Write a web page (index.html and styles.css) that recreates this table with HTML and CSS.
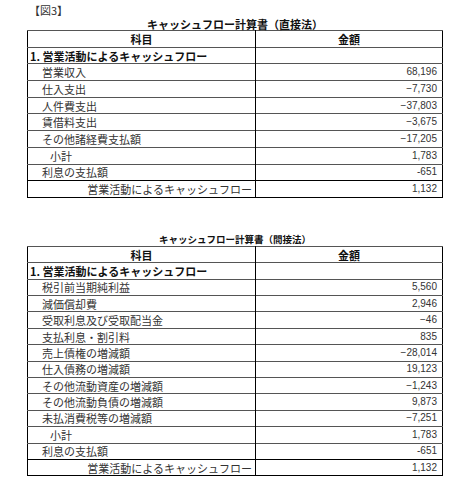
FILE: index.html
```html
<!DOCTYPE html>
<html lang="ja">
<head>
    <meta charset="UTF-8">
    <meta name="viewport" content="width=device-width, initial-scale=1.0">
    <title>キャッシュフロー計算書</title>
    <link rel="stylesheet" href="styles.css">
</head>
<body>
    <div class="page">
        <div class="fig-label">【図3】</div>

        <h2 class="cf-title">キャッシュフロー計算書（直接法）</h2>
        <table class="cf-table direct">
            <tr class="head"><th>科目</th><th>金額</th></tr>
            <tr class="section"><td>1. 営業活動によるキャッシュフロー</td><td></td></tr>
            <tr><td class="item">営業収入</td><td class="num">68,196</td></tr>
            <tr><td class="item">仕入支出</td><td class="num">−7,730</td></tr>
            <tr><td class="item">人件費支出</td><td class="num">−37,803</td></tr>
            <tr><td class="item">賃借料支出</td><td class="num">−3,675</td></tr>
            <tr><td class="item">その他諸経費支払額</td><td class="num">−17,205</td></tr>
            <tr><td class="sub">小計</td><td class="num">1,783</td></tr>
            <tr><td class="item">利息の支払額</td><td class="num">-651</td></tr>
            <tr class="total"><td>営業活動によるキャッシュフロー</td><td class="num">1,132</td></tr>
        </table>

        <h2 class="cf-title small">キャッシュフロー計算書（間接法）</h2>
        <table class="cf-table">
            <tr class="head"><th>科目</th><th>金額</th></tr>
            <tr class="section"><td>1. 営業活動によるキャッシュフロー</td><td></td></tr>
            <tr><td class="item">税引前当期純利益</td><td class="num">5,560</td></tr>
            <tr><td class="item">減価償却費</td><td class="num">2,946</td></tr>
            <tr><td class="item">受取利息及び受取配当金</td><td class="num">−46</td></tr>
            <tr><td class="item">支払利息・割引料</td><td class="num">835</td></tr>
            <tr><td class="item">売上債権の増減額</td><td class="num">−28,014</td></tr>
            <tr><td class="item">仕入債務の増減額</td><td class="num">19,123</td></tr>
            <tr><td class="item">その他流動資産の増減額</td><td class="num">−1,243</td></tr>
            <tr><td class="item">その他流動負債の増減額</td><td class="num">9,873</td></tr>
            <tr><td class="item">未払消費税等の増減額</td><td class="num">−7,251</td></tr>
            <tr><td class="sub">小計</td><td class="num">1,783</td></tr>
            <tr><td class="item">利息の支払額</td><td class="num">-651</td></tr>
            <tr class="total"><td>営業活動によるキャッシュフロー</td><td class="num">1,132</td></tr>
        </table>
    </div>
</body>
</html>
```

FILE: styles.css
```css
* {
    margin: 0;
    padding: 0;
    box-sizing: border-box;
}

body {
    font-family: "Noto Sans CJK JP", sans-serif;
    background: #fff;
    color: #333;
}

.page {
    width: 474px;
    padding: 3px 0 0 27px;
}

.fig-label {
    font-size: 11px;
    line-height: 15px;
    padding-left: 2px;
    color: #333;
}

.cf-title {
    width: 416px;
    text-align: center;
    font-size: 11px;
    line-height: 12px;
    font-weight: bold;
    color: #111;
}

.cf-title.small {
    margin-top: 35px;
    font-size: 9.5px;
    line-height: 13px;
}

.cf-table {
    width: 416px;
    border-collapse: collapse;
    border: 1px solid #000;
    table-layout: fixed;
    font-size: 11px;
}

.cf-table td,
.cf-table th {
    height: 16.4px;
    line-height: 14px;
    padding: 0 3px;
    border-top: 1px solid #555;
    white-space: nowrap;
    overflow: hidden;
}

.cf-table.direct td,
.cf-table.direct th {
    height: 16.7px;
}

.cf-table td:first-child,
.cf-table th:first-child {
    width: 228px;
    border-right: 1px solid #000;
}

.cf-table th {
    font-weight: bold;
    color: #111;
    text-align: center;
}

.cf-table .section td {
    font-weight: bold;
    color: #111;
    padding-left: 2px;
}

.cf-table .item {
    padding-left: 14px;
}

.cf-table .sub {
    padding-left: 22px;
}

.cf-table .num {
    text-align: right;
    padding-right: 5px;
    font-family: "Liberation Sans", Arial, sans-serif;
    font-size: 10px;
}

.cf-table .total td {
    border-top: 1px solid #000;
    text-align: right;
}
```
